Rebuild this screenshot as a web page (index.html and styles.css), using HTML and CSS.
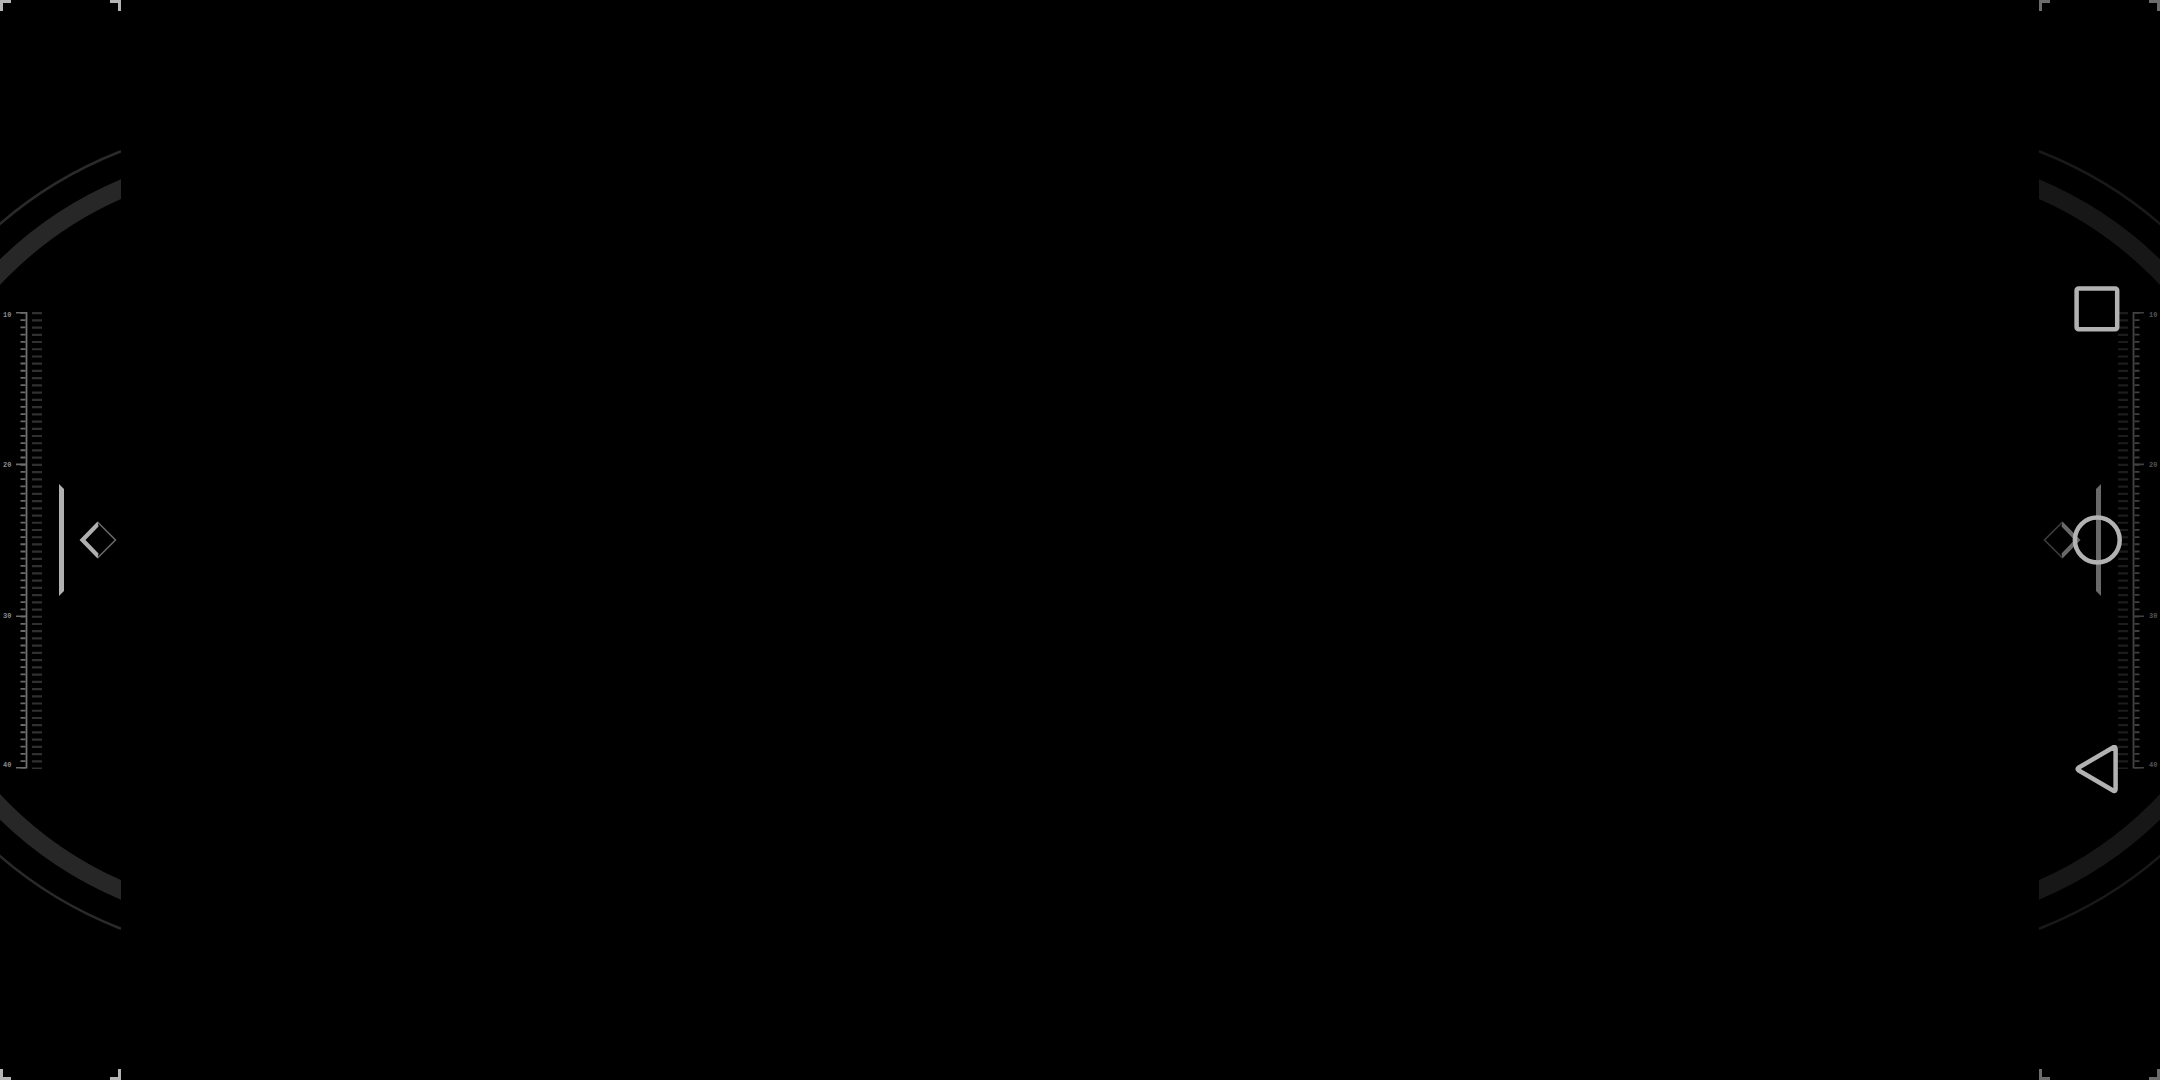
FILE: index.html
```html
<!DOCTYPE html>
<html lang="en">
<head>
    <meta charset="UTF-8">
    <meta name="viewport" content="width=device-width, initial-scale=1.0">
    <title>HUD</title>

    <link rel="stylesheet" href="styles.css">
</head>
<body>
    <main class="hud">
        <svg class="hud__side" viewBox="0 0 121 1080">
            <defs>
                <g id="side">
                    <!-- corners -->
                    <path class="corner" d="M0 0H11V3H3V11H0ZM121 0H110V3H118V11H121ZM0 1080H11V1077H3V1069H0ZM121 1080H110V1077H118V1069H121Z"/>
                    <!-- rings -->
                    <circle class="ring ring--thin" cx="272" cy="540" r="417"/>
                    <circle class="ring" cx="272" cy="539.5" r="381.5"/>
                    <!-- scale -->
                    <path class="scale__line" d="M26.5 312V768.5"/>
                    <path class="scale__ticks" d="M23 312V768.5"/>
                    <path class="scale__major" d="M16 312.8H26M16 464.4H26M16 616.2H26M16 767.8H26"/>
                    <path class="scale__dashes" d="M37 312V769"/>
                    <!-- pointer -->
                    <path class="pointer" d="M59 484L64 489V591L59 596Z"/>
                    <path class="pointer__thin" d="M97.5 522L115.5 540L97.5 558"/>
                    <path class="pointer" d="M79.5 540L97.5 521.5L98.5 526.5L85.5 540L98.5 553.5L97.5 558.5Z"/>
                </g>
            </defs>
            <use href="#side"/>
            <text class="scale__label" x="3" y="317">10</text>
            <text class="scale__label" x="3" y="467">20</text>
            <text class="scale__label" x="3" y="618">30</text>
            <text class="scale__label" x="3" y="767">40</text>
        </svg>

        <svg class="hud__side hud__side--dim" viewBox="0 0 121 1080">
            <use href="#side" transform="translate(121 0) scale(-1 1)"/>
            <text class="scale__label" x="110" y="317">10</text>
            <text class="scale__label" x="110" y="467">20</text>
            <text class="scale__label" x="110" y="618">30</text>
            <text class="scale__label" x="110" y="767">40</text>
        </svg>
    </main>

    <nav class="nav">
        <button class="nav__button" type="button" aria-label="Recent apps">
            <svg class="nav__icon" viewBox="0 0 50 50"><rect x="4.6" y="3.4" width="40.6" height="40.8" rx="2"/></svg>
        </button>
        <button class="nav__button" type="button" aria-label="Home">
            <svg class="nav__icon" viewBox="0 0 50 50"><circle cx="25.3" cy="25" r="22.4"/></svg>
        </button>
        <button class="nav__button" type="button" aria-label="Back">
            <svg class="nav__icon" viewBox="0 0 50 50"><path d="M6.4 22.8L41.5 2.2Q43.6 1.5 43.6 4V44Q43.6 46.5 41.5 45.8L6.4 25.2Q4.8 24 6.4 22.8Z"/></svg>
        </button>
    </nav>
</body>
</html>
```
FILE: styles.css
```css
body{
    margin: 0;
    background: #000;
}

.hud{
    display: flex;
    justify-content: space-between;
    height: 100vh;
}

.hud__side{
    height: 100%;
    overflow: hidden;
}

.hud__side--dim{
    opacity: 0.6;
}

.corner{
    fill: #b4b4b4;
}

.ring{
    fill: none;
    stroke: #272727;
    stroke-width: 18;
}

.ring--thin{
    stroke: #2a2a2a;
    stroke-width: 2.6;
}

.scale__line{
    stroke: #707070;
    stroke-width: 1.8;
}

.scale__ticks{
    stroke: #6a6a6a;
    stroke-width: 5;
    stroke-dasharray: 1.8 5.43;
}

.scale__major{
    stroke: #6c6c6c;
    stroke-width: 1.6;
}

.scale__dashes{
    stroke: #303030;
    stroke-width: 10;
    stroke-dasharray: 2.2 5.03;
}

.scale__label{
    fill: #8c8c8c;
    font: bold 7px "Liberation Mono", monospace;
}

.pointer{
    fill: #b0b0b0;
}

.pointer__thin{
    fill: none;
    stroke: #666;
    stroke-width: 1.6;
}

/* system buttons lie over the right side */
.nav{
    position: absolute;
    top: 0;
    right: 0;
    bottom: 0;
    width: 126px;
    display: flex;
    flex-direction: column;
    align-items: center;
    justify-content: center;
    gap: 180px;
}

.nav__button{
    padding: 0;
    border: 0;
    background: none;
    cursor: pointer;
}

.nav__icon{
    display: block;
    width: 50px;
    height: 50px;
    fill: none;
    stroke: #b2b2b2;
    stroke-width: 4.5;
    stroke-linejoin: round;
}
```
